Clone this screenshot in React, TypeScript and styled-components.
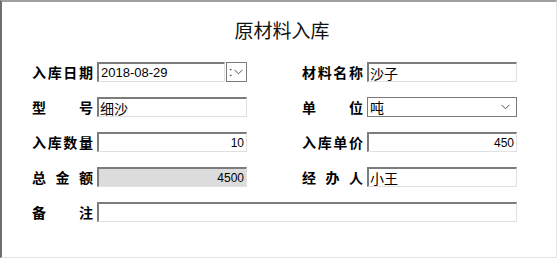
import React from "react";
import styled, { createGlobalStyle } from "styled-components";

const Global = createGlobalStyle`
  html, body { margin: 0; padding: 0; background: #ffffff; }
  body { font-family: "Noto Sans CJK SC", "Liberation Sans", sans-serif; }
`;

const Frame = styled.div`
  box-sizing: border-box;
  width: 557px;
  height: 258px;
  background: #ffffff;
  border-top: 2px solid #a0a0a0;
  border-left: 2px solid #6e6e6e;
  border-right: 1px solid #e3e3e3;
  border-bottom: 1px solid #e3e3e3;
`;

const Title = styled.div`
  height: 56px;
  line-height: 56px;
  text-align: center;
  font-family: "Noto Sans CJK SC", sans-serif;
  font-size: 19px;
  color: #111;
  padding-left: 6px;
`;

const Form = styled.div`
  display: grid;
  grid-template-columns: 65px 150px 55px 65px 150px;
  grid-auto-rows: 20px;
  row-gap: 15px;
  padding: 4px 0 0 30px;
`;

const Label = styled.div`
  display: flex;
  justify-content: space-between;
  align-items: center;
  width: 61px;
  height: 20px;
  font-family: "Noto Sans CJK SC", sans-serif;
  font-weight: 700;
  font-size: 14px;
  color: #000;
`;

const Field = styled.input<{ $align?: "left" | "right"; $disabled?: boolean; $cjk?: boolean }>`
  display: block;
  box-sizing: border-box;
  width: 100%;
  height: 20px;
  margin: 0;
  padding: 0 2px 0 1px;
  border-top: 2px solid #7c7c7c;
  border-left: 2px solid #7c7c7c;
  border-right: 1px solid #e0e0e0;
  border-bottom: 1px solid #e0e0e0;
  outline: none;
  background: ${(p) => (p.$disabled ? "#dcdcdc" : "#ffffff")};
  text-align: ${(p) => p.$align ?? "left"};
  font-family: ${(p) => (p.$cjk ? '"Noto Sans CJK SC", sans-serif' : '"Liberation Sans", sans-serif')};
  font-size: ${(p) => (p.$cjk ? "14px" : "12px")};
  color: #000;
`;

const Wide = styled.div`
  grid-column: 2 / 6;
  display: flex;
  height: 20px;
`;

const DateGroup = styled.div`
  display: flex;
  height: 20px;
`;

const DateField = styled(Field)`
  width: 128px;
  font-size: 13px;
  padding-left: 2px;
`;

const DropButton = styled.div`
  box-sizing: border-box;
  width: 22px;
  height: 20px;
  margin-left: 1px;
  border: 1px solid #7a7a7a;
  display: flex;
  align-items: center;
  padding-left: 2px;
  gap: 2px;
  font-family: "Liberation Sans", sans-serif;
  font-size: 12px;
  color: #000;
`;

const Select = styled.div`
  box-sizing: border-box;
  height: 20px;
  border: 1px solid #7a7a7a;
  display: flex;
  align-items: center;
  justify-content: space-between;
  padding: 0 6px 0 2px;
  font-family: "Noto Sans CJK SC", sans-serif;
  font-size: 14px;
  color: #000;
`;

const Chevron = () => (
  <svg width="9" height="6" viewBox="0 0 9 6">
    <path d="M0.5 0.8 L4.5 4.8 L8.5 0.8" fill="none" stroke="#555" strokeWidth="1" />
  </svg>
);

const Lbl = ({ text }: { text: string }) => (
  <Label>
    {text.split("").map((c, i) => (
      <span key={i}>{c}</span>
    ))}
  </Label>
);

const Spacer = styled.div``;

export default function App() {
  return (
    <>
      <Global />
      <Frame>
        <Title>原材料入库</Title>
        <Form>
          <Lbl text="入库日期" />
          <DateGroup>
            <DateField readOnly defaultValue="2018-08-29" />
            <DropButton>
              <span>:</span>
              <Chevron />
            </DropButton>
          </DateGroup>
          <Spacer />
          <Lbl text="材料名称" />
          <Field readOnly $cjk defaultValue="沙子" />

          <Lbl text="型号" />
          <Field readOnly $cjk defaultValue="细沙" />
          <Spacer />
          <Lbl text="单位" />
          <Select>
            <span>吨</span>
            <Chevron />
          </Select>

          <Lbl text="入库数量" />
          <Field readOnly $align="right" defaultValue="10" />
          <Spacer />
          <Lbl text="入库单价" />
          <Field readOnly $align="right" defaultValue="450" />

          <Lbl text="总金额" />
          <Field readOnly $disabled $align="right" defaultValue="4500" />
          <Spacer />
          <Lbl text="经办人" />
          <Field readOnly $cjk defaultValue="小王" />

          <Lbl text="备注" />
          <Wide>
            <Field readOnly defaultValue="" />
          </Wide>
        </Form>
      </Frame>
    </>
  );
}
